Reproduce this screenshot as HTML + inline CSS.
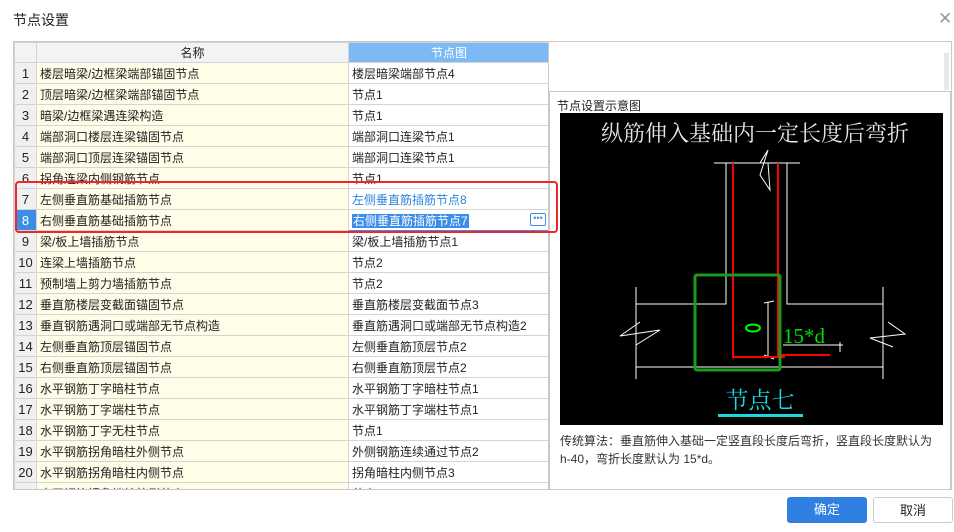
<!DOCTYPE html>
<html><head><meta charset="utf-8"><style>
*{margin:0;padding:0;box-sizing:border-box}
body{width:954px;height:532px;background:#fff;font-family:"Liberation Sans","Noto Sans CJK SC",sans-serif;font-size:12px;color:#222;position:relative;overflow:hidden}
.title{position:absolute;left:13px;top:10px;font-size:14px;color:#222}
.close{position:absolute;left:938px;top:9px;font-size:17px;color:#999;font-weight:300}
.tbl{position:absolute;left:13px;top:41px;width:536px;height:449px;border:1px solid #c8c8c8;overflow:hidden}
table{border-collapse:collapse;table-layout:fixed;width:536px}
td{height:21px;border:1px solid #d4d4d4;padding:0 3px;white-space:nowrap;overflow:hidden;font-size:12px}
td.n{background:#f0f0f0;text-align:center;width:22px;padding:0;font-size:13px}
td.a{background:#fffce8;width:312px}
td.b{background:#fff}
tr.h td{height:20px;text-align:center;background:#f3f3f3}
tr.h td.hb{background:#7cb9f5;color:#fff}
.sel{background:#3b8ee8;color:#fff;padding:0 1px}
.rp{position:absolute;left:549px;top:41px;width:403px;height:449px;border:1px solid #c8c8c8;border-left:none}
.ip{position:absolute;left:549px;top:91px;width:402px;height:399px;border:1px solid #c8c8c8;border-bottom:none}
.sb{position:absolute;left:944px;top:53px;width:5px;height:37px;background:#e8e8e8}
.btn{position:absolute;top:497px;width:80px;height:26px;border-radius:3px;text-align:center;line-height:26px;font-size:13px}
</style></head><body>
<div class="title">节点设置</div>
<div class="close">✕</div>
<div class="rp"></div><div class="sb"></div>
<div class="ip"></div>
<div class="tbl"><table>
<tr class="h"><td class="n" style="background:#f3f3f3"></td><td class="a" style="background:#f3f3f3">名称</td><td class="hb">节点图</td></tr>
<tr><td class="n">1</td><td class="a">楼层暗梁/边框梁端部锚固节点</td><td class="b">楼层暗梁端部节点4</td></tr>
<tr><td class="n">2</td><td class="a">顶层暗梁/边框梁端部锚固节点</td><td class="b">节点1</td></tr>
<tr><td class="n">3</td><td class="a">暗梁/边框梁遇连梁构造</td><td class="b">节点1</td></tr>
<tr><td class="n">4</td><td class="a">端部洞口楼层连梁锚固节点</td><td class="b">端部洞口连梁节点1</td></tr>
<tr><td class="n">5</td><td class="a">端部洞口顶层连梁锚固节点</td><td class="b">端部洞口连梁节点1</td></tr>
<tr><td class="n">6</td><td class="a">拐角连梁内侧钢筋节点</td><td class="b">节点1</td></tr>
<tr><td class="n">7</td><td class="a">左侧垂直筋基础插筋节点</td><td class="b" style="color:#2e86e0">左侧垂直筋插筋节点8</td></tr>
<tr><td class="n" style="background:#3b8ee8;color:#fff">8</td><td class="a">右侧垂直筋基础插筋节点</td><td class="b" style="border:1px solid #3b8ee8;position:relative"><span class="sel">右侧垂直筋插筋节点7</span><span style="position:absolute;right:3px;top:3px;width:16px;height:13px;border:1px solid #3b8ee8;border-radius:2px;font-size:9px;line-height:9px;text-align:center;color:#3b8ee8">•••</span></td></tr>
<tr><td class="n">9</td><td class="a">梁/板上墙插筋节点</td><td class="b">梁/板上墙插筋节点1</td></tr>
<tr><td class="n">10</td><td class="a">连梁上墙插筋节点</td><td class="b">节点2</td></tr>
<tr><td class="n">11</td><td class="a">预制墙上剪力墙插筋节点</td><td class="b">节点2</td></tr>
<tr><td class="n">12</td><td class="a">垂直筋楼层变截面锚固节点</td><td class="b">垂直筋楼层变截面节点3</td></tr>
<tr><td class="n">13</td><td class="a">垂直钢筋遇洞口或端部无节点构造</td><td class="b">垂直筋遇洞口或端部无节点构造2</td></tr>
<tr><td class="n">14</td><td class="a">左侧垂直筋顶层锚固节点</td><td class="b">左侧垂直筋顶层节点2</td></tr>
<tr><td class="n">15</td><td class="a">右侧垂直筋顶层锚固节点</td><td class="b">右侧垂直筋顶层节点2</td></tr>
<tr><td class="n">16</td><td class="a">水平钢筋丁字暗柱节点</td><td class="b">水平钢筋丁字暗柱节点1</td></tr>
<tr><td class="n">17</td><td class="a">水平钢筋丁字端柱节点</td><td class="b">水平钢筋丁字端柱节点1</td></tr>
<tr><td class="n">18</td><td class="a">水平钢筋丁字无柱节点</td><td class="b">节点1</td></tr>
<tr><td class="n">19</td><td class="a">水平钢筋拐角暗柱外侧节点</td><td class="b">外侧钢筋连续通过节点2</td></tr>
<tr><td class="n">20</td><td class="a">水平钢筋拐角暗柱内侧节点</td><td class="b">拐角暗柱内侧节点3</td></tr>
<tr><td class="n">21</td><td class="a">水平钢筋拐角端柱外侧节点</td><td class="b">节点2</td></tr>
</table></div>
<div style="position:absolute;left:15px;top:181px;width:543px;height:52px;border:2px solid #f0262a;border-radius:4px"></div>
<div style="position:absolute;left:557px;top:97px;font-size:12px">节点设置示意图</div>
<svg style="position:absolute;left:560px;top:113px" width="383" height="312" viewBox="560 113 383 312">
<rect x="560" y="113" width="383" height="312" fill="#000"/>
<text x="755" y="141" fill="#e8e8e8" font-size="22" text-anchor="middle" font-family="Noto Serif CJK SC,serif">纵筋伸入基础内一定长度后弯折</text>
<g stroke="#fff" stroke-width="1" fill="none">
<path d="M714 163H800M726 163V304H636M787 163V304H883M636 367H883M636 287V379M883 287V379"/>
<path d="M760 163L768 150L760 175L770 190L768 163"/>
<path d="M640 322L620 336L660 330L636 345"/>
<path d="M888 322L905 334L870 338L893 347"/>
<path d="M768 302V357M764 303L774 301M764 355L774 359M783 345H843M840 342V352"/>
</g>
<g stroke="#f00" stroke-width="2" fill="none"><path d="M733 163V357H785M778 163V355H830"/></g>
<rect x="695" y="275" width="85" height="95" fill="none" stroke="#1d9a1d" stroke-width="3" rx="2"/>
<ellipse cx="753" cy="328" rx="7" ry="3.5" fill="none" stroke="#0f0" stroke-width="2"/>
<text x="783" y="343" fill="#0d0" font-size="21" font-family="Liberation Serif,serif">15*d</text>
<text x="760" y="408" fill="#1ad8e0" font-size="23" text-anchor="middle" font-family="Noto Serif CJK SC,serif">节点七</text>
<rect x="718" y="414" width="85" height="3" fill="#1ad8e0"/>
</svg>
<div style="position:absolute;left:560px;top:432px;width:376px;font-size:12px;line-height:18px;color:#333;word-break:normal;overflow-wrap:normal">传统算法：垂直筋伸入基础一定竖直段长度后弯折，竖直段长度默认为<br>h-40，弯折长度默认为 15*d。</div>
<div class="btn" style="left:787px;background:#2f80e2;color:#fff">确定</div>
<div class="btn" style="left:873px;border:1px solid #ccc;color:#222">取消</div>
</body></html>
